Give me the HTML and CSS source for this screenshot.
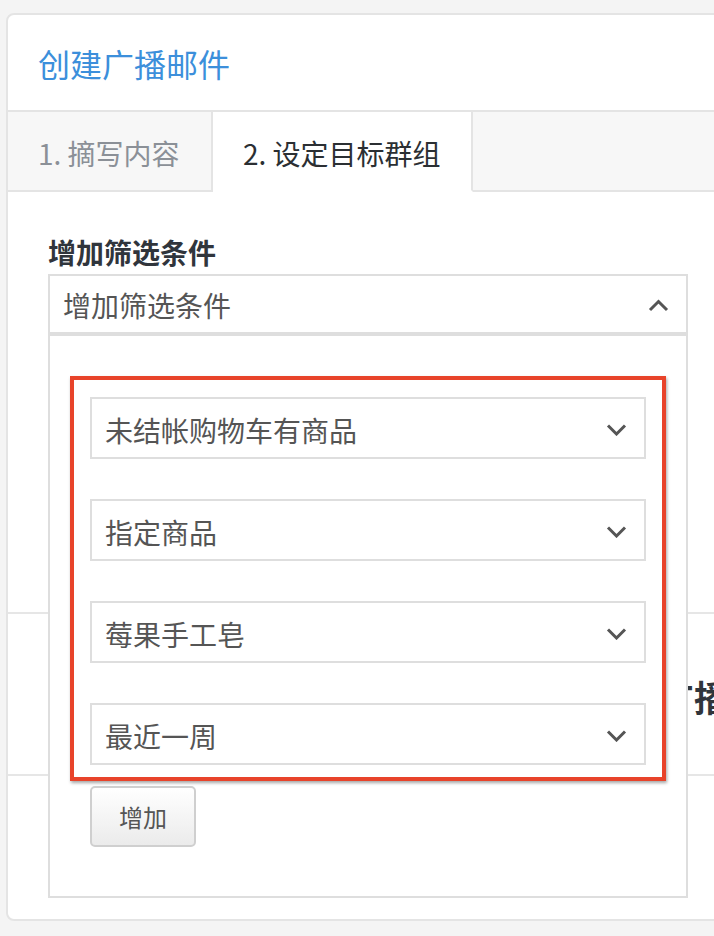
FILE: index.html
```
<!DOCTYPE html>
<html lang="zh-CN">
<head>
<meta charset="utf-8">
<title>创建广播邮件</title>
<link rel="stylesheet" href="styles.css">
</head>
<body>
<div class="card">
  <div class="card-header"><h1 class="title">创建广播邮件</h1></div>
  <div class="tabs">
    <div class="tab tab-1">1. 摘写内容</div>
    <div class="tab tab-2">2. 设定目标群组</div>
    <div class="tab-fill"></div>
  </div>
  <div class="form-section">
    <div class="label">增加筛选条件</div>
    <div class="dropdown">
      <div class="dd-head">
        <span>增加筛选条件</span>
        <svg class="chev" width="21" height="13" viewBox="0 0 21 13"><polyline points="2,11 10.5,2.5 19,11" fill="none" stroke="#555" stroke-width="3"/></svg>
      </div>
      <div class="dd-panel">
        <div class="highlight">
          <div class="select"><span>未结帐购物车有商品</span><svg class="chev" width="21" height="12" viewBox="0 0 21 12"><polyline points="2,1.5 10.5,10 19,1.5" fill="none" stroke="#555" stroke-width="3"/></svg></div>
          <div class="select"><span>指定商品</span><svg class="chev" width="21" height="12" viewBox="0 0 21 12"><polyline points="2,1.5 10.5,10 19,1.5" fill="none" stroke="#555" stroke-width="3"/></svg></div>
          <div class="select"><span>莓果手工皂</span><svg class="chev" width="21" height="12" viewBox="0 0 21 12"><polyline points="2,1.5 10.5,10 19,1.5" fill="none" stroke="#555" stroke-width="3"/></svg></div>
          <div class="select"><span>最近一周</span><svg class="chev" width="21" height="12" viewBox="0 0 21 12"><polyline points="2,1.5 10.5,10 19,1.5" fill="none" stroke="#555" stroke-width="3"/></svg></div>
        </div>
        <button class="btn">增加</button>
      </div>
    </div>
  </div>
  <div class="next-section"><h2 class="next-title">发送广播</h2></div>
  <div class="last-section"></div>
</div>
</body>
</html>
```
FILE: styles.css
```
* { box-sizing: border-box; }
html, body { margin: 0; overflow: hidden; }
body {
  background: #f4f4f4;
  width: 714px;
  height: 936px;
  font-family: "Noto Sans CJK SC", "Noto Sans", sans-serif;
}
.card {
  margin: 13px 0 0 6px;
  width: 760px;
  height: 908px;
  background: #fff;
  border: 2px solid #e4e4e4;
  border-radius: 8px;
}
.card-header {
  height: 97px;
  border-bottom: 2px solid #e4e4e4;
  display: flex;
  align-items: center;
  padding-left: 30px;
}
.title {
  margin: 0;
  font-size: 32px;
  font-weight: 400;
  line-height: 1;
  color: #3c8fdb;
}
.tabs {
  display: flex;
  height: 80px;
  background: #f7f7f7;
}
.tab {
  display: flex;
  align-items: center;
  padding: 4px 0 0 30px;
  font-size: 28px;
  color: #8b9097;
  border-bottom: 2px solid #e4e4e4;
  border-right: 2px solid #e4e4e4;
}
.tab-1 { width: 205px; }
.tab-2 {
  width: 260px;
  background: #fff;
  color: #2b2f33;
  border-bottom-color: #fff;
}
.tab-fill {
  flex: 1;
  border-bottom: 2px solid #e4e4e4;
}
.form-section {
  height: 422px;
  padding: 42px 40px 0;
  border-bottom: 2px solid #e6e6e6;
}
.label {
  font-size: 28px;
  line-height: 36px;
  font-weight: 700;
  color: #30353c;
  margin-bottom: 4px;
}
.dropdown {
  position: relative;
  width: 640px;
}
.dd-head {
  height: 62px;
  border: 2px solid #dedede;
  border-bottom-width: 4px;
  display: flex;
  align-items: center;
  justify-content: space-between;
  padding: 2px 17px 0 13px;
  font-size: 28px;
  color: #555;
}
.chev { display: block; }
.dd-panel {
  position: absolute;
  top: 62px;
  left: 0;
  width: 640px;
  background: #fff;
  border: 2px solid #dedede;
  border-top: none;
  padding: 40px 20px 49px;
  z-index: 2;
}
.highlight {
  border: 4px solid #e8432a;
  padding: 17px 16px 12px;
  box-shadow: 1px 2px 3px rgba(0, 0, 0, 0.35);
  display: flex;
  flex-direction: column;
  gap: 40px;
}
.select {
  height: 62px;
  border: 2px solid #dedede;
  display: flex;
  align-items: center;
  justify-content: space-between;
  padding: 3px 17px 0 13px;
  font-size: 28px;
  color: #555;
}
.btn {
  display: block;
  margin: 5px 0 0 20px;
  width: 106px;
  height: 61px;
  border: 2px solid #cfcfcf;
  border-radius: 5px;
  background: linear-gradient(#ffffff, #ebebeb);
  font-family: inherit;
  font-size: 24px;
  color: #555;
  padding: 0;
}
.next-section {
  height: 162px;
  border-bottom: 2px solid #e6e6e6;
  display: flex;
  align-items: center;
  padding: 4px 0 0 578px;
}
.next-title {
  margin: 0;
  font-size: 36px;
  font-weight: 700;
  line-height: 1;
  color: #30353c;
  white-space: nowrap;
}
.last-section { height: 140px; }
```
